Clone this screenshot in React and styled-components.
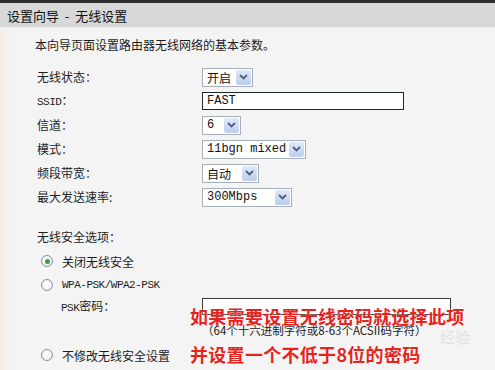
import React from 'react';
import styled, {createGlobalStyle} from 'styled-components';

const GlobalStyle = createGlobalStyle`
  html, body {
    margin: 0;
    padding: 0;
    width: 495px;
    height: 370px;
    overflow: hidden;
    background: #f4f4f4;
  }
  body {
    font-family: "Noto Sans CJK SC", sans-serif;
    font-size: 12px;
    color: #1c1c1c;
  }
`;

const Frame = styled.div`
  position: relative;
  width: 495px;
  height: 370px;
  display: flex;
  flex-direction: column;
  border-top: 3px solid #2e2e2e;
  box-sizing: border-box;
`;

const Header = styled.div`
  height: 24px;
  display: flex;
  align-items: center;
  padding-left: 7px;
  background: #d8d8d8;
  border-bottom: 2px solid #efefef;
  font-size: 13px;
  color: #111;
  white-space: pre;
`;

const Body = styled.div`
  flex: 1;
  padding: 8px 0 0 37px;
  background: linear-gradient(to right, #f7ebe3 0, #f5f1ee 6px, #f4f4f4 12px);
`;

const Intro = styled.div`
  line-height: 16px;
  margin-left: -2px;
`;

const Form = styled.div`
  display: grid;
  grid-template-columns: 165px auto;
  grid-auto-rows: 24px;
  align-items: center;
  margin-top: 12px;
`;

const Label = styled.div`
  line-height: 16px;
  padding-left: ${p => p.$indent || 0}px;
`;

const Ascii = styled.span`
  font-family: "Liberation Mono", monospace;
  font-size: 11px;
  letter-spacing: -0.5px;
`;

const SelectBox = styled.div`
  width: ${p => p.$w}px;
  height: 19px;
  box-sizing: border-box;
  border: 1px solid #a6b0ba;
  background: #fff;
  display: flex;
  align-items: center;
  justify-content: space-between;
  padding: 0 1px 0 4px;
`;

const Value = styled.span`
  font-family: ${p => p.$mono ? '"Liberation Mono", monospace' : '"Noto Sans CJK SC", sans-serif'};
  font-size: 12px;
  color: #111;
`;

const DropButton = styled.span`
  width: 15px;
  height: 15px;
  background: linear-gradient(#dfe8f8, #bccdeb);
  border-radius: 2px;
  display: flex;
  align-items: center;
  justify-content: center;
`;

const TextInput = styled.div`
  width: ${p => p.$w}px;
  height: ${p => p.$h || 18}px;
  box-sizing: border-box;
  border: 1px solid ${p => p.$dark ? '#1e2a24' : '#3a3a3a'};
  background: #fff;
  display: flex;
  align-items: center;
  padding-left: 4px;
`;

const Section = styled.div`
  margin-top: 20px;
  line-height: 16px;
`;

const RadioRow = styled.div`
  display: flex;
  align-items: center;
  gap: 9px;
  height: 24px;
  margin-top: ${p => p.$top || 0}px;
  padding-left: 4px;
`;

const Radio = styled.span`
  width: 12px;
  height: 12px;
  box-sizing: border-box;
  border-radius: 50%;
  border: 1px solid #8593a0;
  background: radial-gradient(circle at 40% 40%, #ffffff, #e6e9ec);
  display: flex;
  align-items: center;
  justify-content: center;
  &::after {
    content: '';
    width: 5px;
    height: 5px;
    border-radius: 50%;
    background: ${p => p.$checked ? '#3f9b47' : 'transparent'};
  }
`;

const PskRow = styled.div`
  display: grid;
  grid-template-columns: 165px auto;
  align-items: start;
  height: 25px;
  margin-top: 1px;
`;

const Hint = styled.div`
  margin-left: 165px;
  font-size: 11.5px;
  line-height: 14px;
  height: 14px;
  color: #222;
`;

const Note = styled.div`
  position: absolute;
  left: 190px;
  top: ${p => p.$top}px;
  font-size: 18px;
  font-weight: bold;
  line-height: 18px;
  color: #e8231d;
  letter-spacing: 0.3px;
  text-shadow: 0 0 2px rgba(255, 255, 255, 0.9);
`;

const Watermark = styled.div`
  position: absolute;
  left: 440px;
  top: 326px;
  font-size: 15px;
  line-height: 15px;
  color: #e2e2e2;
`;

const Chevron = () => (
  <svg width="9" height="6" viewBox="0 0 9 6">
    <path d="M1 1 L4.5 4.5 L8 1" fill="none" stroke="#4a5f86" strokeWidth="1.8"/>
  </svg>
);

const Select = ({width, value, mono}) => (
  <SelectBox $w={width}>
    <Value $mono={mono}>{value}</Value>
    <DropButton><Chevron/></DropButton>
  </SelectBox>
);

const App = () => {
  return (
    <>
      <GlobalStyle/>
      <Frame>
        <Header>{'设置向导  -  无线设置'}</Header>
        <Body>
          <Intro>本向导页面设置路由器无线网络的基本参数。</Intro>
          <Form>
            <Label>无线状态：</Label>
            <Select width={51} value="开启"/>
            <Label><Ascii>SSID</Ascii>：</Label>
            <TextInput $w={202} $dark><Value $mono>FAST</Value></TextInput>
            <Label>信道：</Label>
            <Select width={39} value="6" mono/>
            <Label>模式：</Label>
            <Select width={104} value="11bgn mixed" mono/>
            <Label>频段带宽：</Label>
            <Select width={57} value="自动"/>
            <Label>最大发送速率:</Label>
            <Select width={90} value="300Mbps" mono/>
          </Form>
          <Section>无线安全选项：</Section>
          <RadioRow $top={4}>
            <Radio $checked/>
            <span>关闭无线安全</span>
          </RadioRow>
          <RadioRow>
            <Radio/>
            <Ascii>WPA-PSK/WPA2-PSK</Ascii>
          </RadioRow>
          <PskRow>
            <Label $indent={24}><Ascii>PSK</Ascii>密码：</Label>
            <TextInput $w={249} $h={17}/>
          </PskRow>
          <Hint>（64个十六进制字符或8-63个ACSII码字符）</Hint>
          <RadioRow $top={6}>
            <Radio/>
            <span>不修改无线安全设置</span>
          </RadioRow>
        </Body>
        <Watermark>经验</Watermark>
        <Note $top={304}>如果需要设置无线密码就选择此项</Note>
        <Note $top={342}>并设置一个不低于8位的密码</Note>
      </Frame>
    </>
  );
};

export default App;
